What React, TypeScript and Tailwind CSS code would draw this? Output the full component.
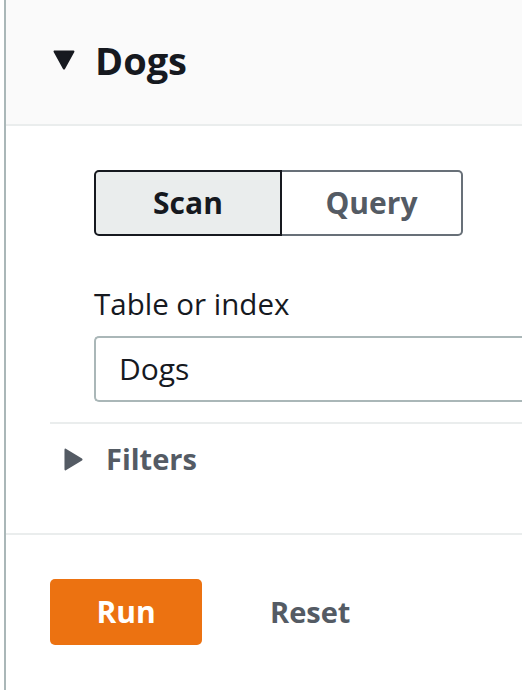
import React from "react";

// Collapsible panel with a Scan / Query switch, table picker and run buttons.
const font = { fontFamily: '"Open Sans", "Noto Sans", sans-serif' };

function Caret({ open, className }: { open: boolean; className?: string }) {
  return (
    <svg viewBox="0 0 20 20" className={className} aria-hidden preserveAspectRatio="none">
      {open ? (
        <path d="M1.5 1.5 L18.5 1.5 L10 18.5 Z" fill="currentColor" strokeLinejoin="round" stroke="currentColor" strokeWidth="2" />
      ) : (
        <path d="M1.5 1.5 L18.5 10 L1.5 18.5 Z" fill="currentColor" strokeLinejoin="round" stroke="currentColor" strokeWidth="2" />
      )}
    </svg>
  );
}

export default function App() {
  return (
    <div className="min-h-[690px] w-[522px] bg-white pl-1" style={font}>
      <div className="min-h-[690px] border-l-2 border-[#aab7b8]">
        {/* header */}
        <div className="flex h-[126px] items-center border-b-2 border-[#eaeded] bg-[#fafafa] pl-[47px] pb-[4px]">
          <Caret open className="h-[20px] w-[22px] text-[#16191f]" />
          <span className="ml-[20px] text-[38px] leading-[48px] font-bold text-[#16191f]">Dogs</span>
        </div>

        {/* body */}
        <div className="pl-[44px]">
          <div className="pl-[44px] pt-[44px]">
            <div className="flex h-[66px] w-[369px]">
              <button className="flex w-[188px] items-center justify-center rounded-l-[5px] border-2 border-[#16191f] bg-[#eaeded] text-[30px] leading-[40px] font-bold text-[#16191f]">
                Scan
              </button>
              <button className="flex flex-1 items-center justify-center rounded-r-[5px] border-2 border-l-0 border-[#687078] bg-white text-[30px] leading-[40px] font-bold text-[#545b64]">
                Query
              </button>
            </div>
            <div className="mt-[48px] text-[29.5px] leading-[40px] text-[#16191f]">Table or index</div>
            <div className="mt-[12px] flex h-[66px] items-center rounded-l-[5px] border-2 border-r-0 border-[#aab7b8] pl-[23px] text-[30px] leading-[40px] text-[#16191f]">
              Dogs
            </div>
          </div>
          <div className="mt-[20px] border-t-2 border-[#eaeded]" />
          <div className="flex h-[74px] items-center pl-[14px] pb-[4px] text-[#545b64]">
            <Caret open={false} className="h-[23px] w-[19px]" />
            <span className="ml-[23px] text-[29px] leading-[40px] font-bold">Filters</span>
          </div>
        </div>
        <div className="mt-[35px] border-t-2 border-[#eaeded]" />
        <div className="flex items-center pl-[44px] pt-[44px]">
          <button className="flex h-[66px] w-[152px] items-center justify-center rounded-[5px] bg-[#ec7211] text-[30px] leading-[40px] font-bold text-white">
            Run
          </button>
          <button className="ml-[68px] text-[29px] leading-[40px] font-bold text-[#545b64]">Reset</button>
        </div>
      </div>
    </div>
  );
}
